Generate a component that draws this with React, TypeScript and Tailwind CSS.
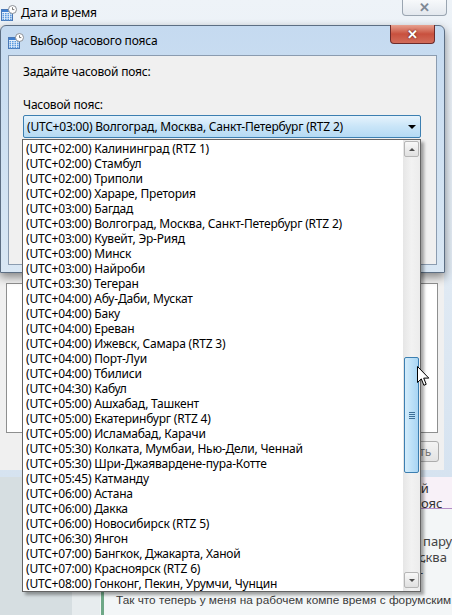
import React from "react";

const zones: [string, string][] = [
  ["(UTC+02:00)", "Калининград (RTZ 1)"],
  ["(UTC+02:00)", "Стамбул"],
  ["(UTC+02:00)", "Триполи"],
  ["(UTC+02:00)", "Хараре, Претория"],
  ["(UTC+03:00)", "Багдад"],
  ["(UTC+03:00)", "Волгоград, Москва, Санкт-Петербург (RTZ 2)"],
  ["(UTC+03:00)", "Кувейт, Эр-Рияд"],
  ["(UTC+03:00)", "Минск"],
  ["(UTC+03:00)", "Найроби"],
  ["(UTC+03:30)", "Тегеран"],
  ["(UTC+04:00)", "Абу-Даби, Мускат"],
  ["(UTC+04:00)", "Баку"],
  ["(UTC+04:00)", "Ереван"],
  ["(UTC+04:00)", "Ижевск, Самара (RTZ 3)"],
  ["(UTC+04:00)", "Порт-Луи"],
  ["(UTC+04:00)", "Тбилиси"],
  ["(UTC+04:30)", "Кабул"],
  ["(UTC+05:00)", "Ашхабад, Ташкент"],
  ["(UTC+05:00)", "Екатеринбург (RTZ 4)"],
  ["(UTC+05:00)", "Исламабад, Карачи"],
  ["(UTC+05:30)", "Колката, Мумбаи, Нью-Дели, Ченнай"],
  ["(UTC+05:30)", "Шри-Джаявардене-пура-Котте"],
  ["(UTC+05:45)", "Катманду"],
  ["(UTC+06:00)", "Астана"],
  ["(UTC+06:00)", "Дакка"],
  ["(UTC+06:00)", "Новосибирск (RTZ 5)"],
  ["(UTC+06:30)", "Янгон"],
  ["(UTC+07:00)", "Бангкок, Джакарта, Ханой"],
  ["(UTC+07:00)", "Красноярск (RTZ 6)"],
  ["(UTC+08:00)", "Гонконг, Пекин, Урумчи, Чунцин"],
];

function ClockCalendarIcon() {
  return (
    <svg width="16" height="16" viewBox="0 0 16 16">
      <rect x="0.5" y="4.5" width="11" height="11" fill="#e8f1fb" stroke="#4a78b5" />
      <rect x="1" y="5" width="10" height="2" fill="#3f7fcf" />
      {[0, 1, 2, 3].map((r) =>
        [0, 1, 2, 3].map((c) => (
          <rect key={`${r}-${c}`} x={1.5 + c * 2.5} y={8 + r * 2} width="1.6" height="1.4" fill="#5b9be0" />
        ))
      )}
      <circle cx="11.5" cy="4.5" r="4" fill="#ffffff" stroke="#8a8f96" />
      <path d="M11.5 2.3 V4.6 H13.3" fill="none" stroke="#555" strokeWidth="0.8" />
    </svg>
  );
}

function Cursor() {
  return (
    <svg width="13" height="21" viewBox="0 0 13 21">
      <path
        d="M0.5 0.5 L0.5 16.5 L4.3 12.9 L6.9 19.3 L9.2 18.3 L6.7 12.1 L11.8 12.1 Z"
        fill="#ffffff"
        stroke="#000000"
        strokeWidth="1"
        strokeLinejoin="round"
      />
    </svg>
  );
}

export default function App() {
  return (
    <div
      className="relative h-[615px] w-[452px] overflow-hidden bg-[#d6dee1] text-[12px] tracking-[-0.2px] text-black"
      style={{ fontFamily: '"Noto Sans", "Open Sans", sans-serif' }}
    >
      {/* forum page behind */}
      <div className="absolute left-0 top-[477px] flex h-[138px] w-[452px] tracking-normal">
        <div className="w-[72px] bg-[#d6dee1]" />
        <div className="w-[28px] bg-[#e7ecee]" />
        <div className="relative flex-1 bg-[#f3f6f7]">
          <div className="absolute left-0 right-0 top-0 h-[32px] border-b border-[#b38dc6] bg-[#f8f1f8]">
            <span className="absolute left-[313px] top-[4px] text-[13px] leading-[15px] text-[#333]">ой пояс</span>
          </div>
          <span className="absolute left-[323px] top-[57px] text-[13px] leading-[15px] text-[#444]">пару ,</span>
          <span className="absolute left-[319px] top-[73px] text-[13px] leading-[15px] text-[#444]">сква -</span>
          <div className="absolute left-[1px] top-[113px] h-[25px] w-[3px] bg-[#6fa887]" />
          <span
            className="absolute left-[16px] top-[116px] whitespace-nowrap text-[11.8px] leading-[15px] text-[#3a3a3a]"
            style={{ fontFamily: '"Liberation Sans", Arial, sans-serif' }}
          >
            Так что теперь у меня на рабочем компе время с форумским
          </span>
        </div>
      </div>

      {/* outer window: Дата и время */}
      <div className="absolute left-0 top-0 flex h-[477px] w-[452px] flex-col bg-gradient-to-b from-[#eef3f8] to-[#d6e3f0]">
        <div className="flex h-[25px] items-center pl-[1px]">
          <ClockCalendarIcon />
          <span className="ml-[4px] text-[12px] text-black">Дата и время</span>
          <div className="ml-auto mr-[5px] flex h-[16px] w-[45px] -translate-y-[5px] items-center justify-center rounded-b-[4px] border border-t-0 border-[#9aa5b1] bg-gradient-to-b from-[#f7f9fb] to-[#e3e8ee]">
            <span className="text-[13px] font-bold leading-none text-[#7f8995]">✕</span>
          </div>
        </div>
        <div className="relative mr-[8px] flex-1 bg-[#f0f0f0]">
          <div className="absolute left-[6px] top-[258px] h-[150px] w-[432px] border border-[#8e8f8f] bg-white" />
          <div className="absolute left-[360px] top-[416px] flex h-[21px] w-[79px] items-center justify-end rounded-[3px] border border-[#acacac] bg-gradient-to-b from-[#f4f4f4] to-[#e3e3e3] pr-[7px] text-[12px] text-[#777]">
            Отменить
          </div>
        </div>
        <div className="h-[7px]" />
      </div>

      {/* dialog: Выбор часового пояса */}
      <div className="absolute left-0 top-[25px] flex h-[248px] w-[445px] flex-col rounded-t-[6px] border border-[#5c6e83] bg-gradient-to-b from-[#c5daf0] via-[#cfe1f2] to-[#d9e7f4] shadow-[0_4px_10px_rgba(0,0,0,0.45)]">
        <div className="flex h-[29px] items-center pl-[7px]">
          <ClockCalendarIcon />
          <span className="ml-[6px] text-[12px] text-black">Выбор часового пояса</span>
          <div className="ml-auto mr-[9px] flex h-[19px] w-[45px] -translate-y-[6px] items-center justify-center rounded-b-[4px] border border-t-0 border-[#6b2b2b] bg-gradient-to-b from-[#e6a08f] via-[#c8503e] to-[#d26c5a]">
            <span className="text-[13px] font-bold leading-none text-white" style={{ textShadow: "0 0 2px #40110c" }}>
              ✕
            </span>
          </div>
        </div>
        <div className="mx-[7px] mb-[7px] flex-1 border border-[#8b9cb0] bg-[#f0f0f0] pl-[14px] pt-[8px]">
          <div className="h-[15px] leading-[15px]">Задайте часовой пояс:</div>
          <div className="mt-[18px] h-[15px] leading-[15px]">Часовой пояс:</div>
          <div className="mt-[3px] flex h-[23px] w-[398px] items-center rounded-[2px] border border-[#3c7fb1] bg-gradient-to-b from-[#e6f3fc] via-[#c9e5f8] to-[#b5daf3] pl-[3px]">
            <span>(UTC+03:00) Волгоград, Москва, Санкт-Петербург (RTZ 2)</span>
            <span className="ml-auto mr-[4px] h-0 w-0 border-x-[4px] border-t-[4px] border-x-transparent border-t-black" />
          </div>
        </div>
      </div>

      {/* dropdown list */}
      <div className="absolute left-[22px] top-[139px] flex h-[453px] w-[399px] border border-[#646464] bg-white shadow-[3px_3px_3px_rgba(0,0,0,0.35)]">
        <div className="flex-1 pl-[3px] pt-[1px]">
          {zones.map(([off, name]) => (
            <div key={off + name} className="h-[15px] whitespace-nowrap leading-[15px]">
              {off} {name}
            </div>
          ))}
        </div>
        <div className="flex w-[17px] flex-col bg-gradient-to-r from-[#e6e6e6] via-[#f2f2f2] to-[#ececec] p-[1px]">
          <div className="flex h-[16px] items-center justify-center rounded-[2px] border border-[#b5b5b5] bg-gradient-to-b from-[#f8f8f8] to-[#e0e0e0]">
            <span className="h-0 w-0 border-x-[3px] border-b-[3px] border-x-transparent border-b-[#4d4d4d]" />
          </div>
          <div className="h-[200px]" />
          <div className="flex h-[116px] items-center justify-center rounded-[2px] border border-[#3c7fb1] bg-gradient-to-r from-[#d4ecfb] via-[#bde1f8] to-[#a9d5f3]">
            <div className="flex flex-col gap-[1px]">
              <span className="h-[1px] w-[6px] bg-[#3d6f97]" />
              <span className="h-[1px] w-[6px] bg-[#3d6f97]" />
              <span className="h-[1px] w-[6px] bg-[#3d6f97]" />
              <span className="h-[1px] w-[6px] bg-[#3d6f97]" />
            </div>
          </div>
          <div className="flex-1" />
          <div className="mb-[2px] flex h-[16px] items-center justify-center rounded-[2px] border border-[#b5b5b5] bg-gradient-to-b from-[#f8f8f8] to-[#e0e0e0]">
            <span className="h-0 w-0 border-x-[3px] border-t-[3px] border-x-transparent border-t-[#4d4d4d]" />
          </div>
        </div>
      </div>

      <div className="absolute left-[417px] top-[366px]">
        <Cursor />
      </div>
    </div>
  );
}
